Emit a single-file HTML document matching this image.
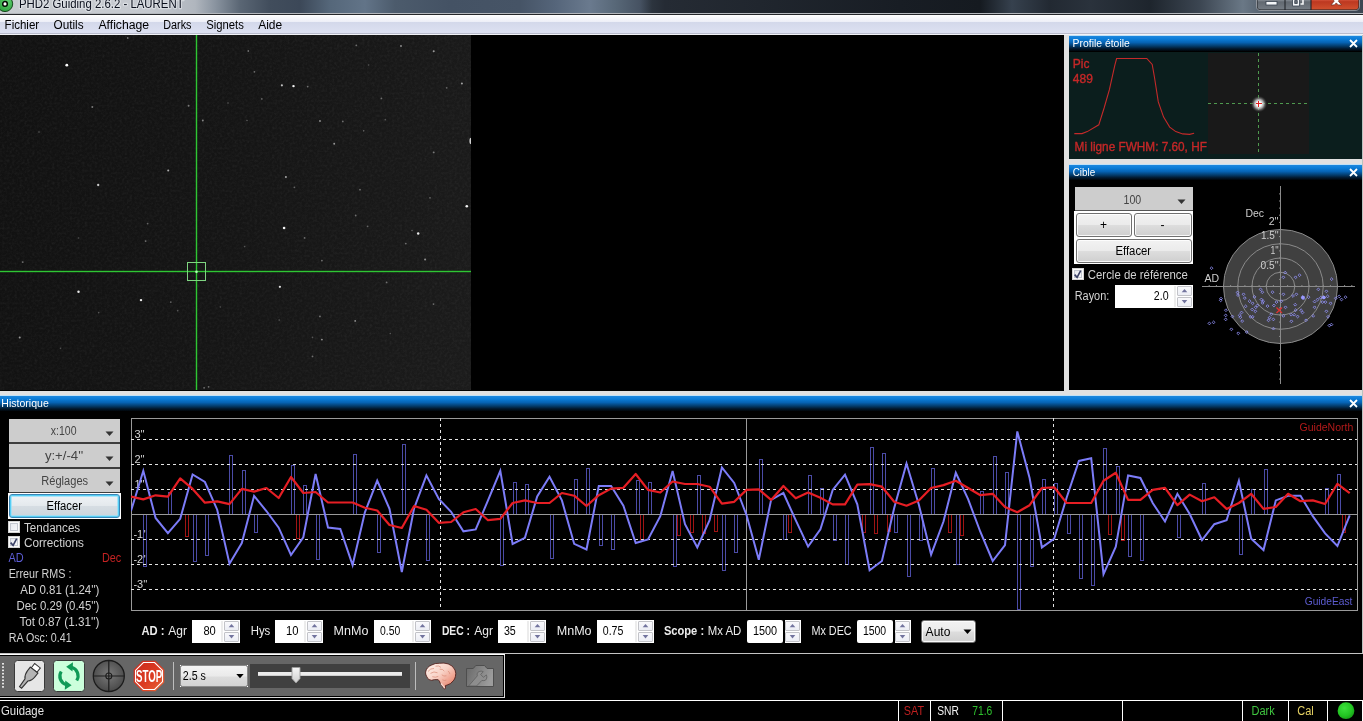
<!DOCTYPE html>
<html lang="fr"><head><meta charset="utf-8"><title>PHD2 Guiding 2.6.2 - LAURENT</title>
<style>
html,body{margin:0;padding:0;background:#000;}
body{width:1363px;height:721px;overflow:hidden;position:relative;font-family:"Liberation Sans",sans-serif;font-size:12px;}
#root{position:absolute;left:0;top:0;width:1363px;height:721px;overflow:hidden;background:#000;}
#root div,#root svg{position:absolute;box-sizing:border-box;}
.cap{background:linear-gradient(to bottom,#bfe0f6 0,#bfe0f6 1px,#1e88de 1px,#0a7cd8 4px,#0663b4 7.5px,#033c6c 11px,#021c34 13.5px,#000 16.5px);}
.silver{background:#cdcdcd;border-bottom:0 solid #3c3c3c;}
.w7btn{border:1px solid #707070;border-radius:3px;background:linear-gradient(to bottom,#f2f2f2 0,#ebebeb 48%,#dddddd 52%,#cfcfcf 100%);box-shadow:inset 0 0 0 1px rgba(255,255,255,.85);}
.w7hot{border:1px solid #3a86b6;border-radius:3px;background:linear-gradient(to bottom,#f0f3f6 0,#e4e9ed 48%,#d6dde3 52%,#ccd5dc 100%);box-shadow:inset 0 0 0 1px #56cef4, inset 0 0 0 2px rgba(150,224,250,.75);}
.spin{background:#fff;}
.sb{border:1px solid #c2c3c8;border-radius:1px;background:linear-gradient(to bottom,#f9f9fc 0,#eceef5 100%);}
.chk{width:12px;height:12px;border:1px solid #d4d4d4;background:linear-gradient(135deg,#e2e4ea 0,#f4f5f8 70%,#fff 100%);box-shadow:inset 0 0 0 1px #fbfbfb, inset 0 0 0 2px #c4c8d0;}
</style></head>
<body><div id="root">
<div id="titlebar" style="left:0;top:0;width:1363px;height:13px;background:linear-gradient(to right,#c9cdd2 0,#c4c8ce 150px,#b0b6be 195px,#8a94a0 215px,#5a6674 240px,#414d5c 270px,#3c4858 300px,#55677a 330px,#627488 365px,#4c5b6c 395px,#445264 450px,#465466 520px,#55657a 555px,#6a7a8e 590px,#586878 615px,#465262 640px,#2c343e 652px,#252b34 665px,#20262e 760px,#181d24 900px,#151a20 980px,#36414e 1012px,#222932 1050px,#2a323c 1090px,#1e252d 1150px,#3c4652 1200px,#6a7886 1243px,#56626f 1262px,#3c4652 1363px);"></div>
<div style="left:0;top:13px;width:1363px;height:1px;background:#b4b8bd;"></div>
<div style="left:0;top:14px;width:1363px;height:1px;background:#25272b;"></div>
<svg style="left:0;top:0" width="16" height="13" viewBox="0 0 16 13"><defs><radialGradient id="ic" cx=".65" cy=".3" r=".8"><stop offset="0" stop-color="#5fd070"/><stop offset="1" stop-color="#2a9a3a"/></radialGradient></defs><circle cx="5" cy="3.900" r="7.700" fill="url(#ic)" stroke="#0c3c12" stroke-width=".9"/><circle cx="5" cy="3.900" r="2.300" fill="#fff" stroke="#020a02" stroke-width="1.500"/></svg>
<svg style="left:1254px;top:0" width="109" height="13" viewBox="0 0 109 13">
<defs><linearGradient id="wb1" x1="0" y1="0" x2="0" y2="1"><stop offset="0" stop-color="#8e959d"/><stop offset=".45" stop-color="#7a8189"/><stop offset=".5" stop-color="#626971"/><stop offset="1" stop-color="#757c84"/></linearGradient>
<linearGradient id="wb2" x1="0" y1="0" x2="0" y2="1"><stop offset="0" stop-color="#de7a64"/><stop offset=".4" stop-color="#cf4e36"/><stop offset=".5" stop-color="#bd3820"/><stop offset="1" stop-color="#d0502e"/></linearGradient></defs>
<path d="M2.5,-6 V6 Q2.5,10.5 7,10.5 H101 Q105.500,10.5 105.5,6 V-6 Z" fill="#1a1d22" stroke="#d7dbe0" stroke-opacity=".55" stroke-width="1"/>
<path d="M3.5,-6 V6 Q3.5,9.5 7,9.5 H30.500 V-6 Z" fill="url(#wb1)"/>
<path d="M31.500,-6 V9.5 H56.500 V-6 Z" fill="url(#wb1)"/>
<path d="M57.500,-6 V9.5 H101 Q104.500,9.500 104.500,6 V-6 Z" fill="url(#wb2)"/>
<rect x="12" y="1.500" width="11" height="3.500" fill="#f4f6f8" stroke="#3a4450" stroke-width=".8"/>
<path d="M38.500,-2 h7 v8 h-7 z M40.700,0.500 h2.600 v3 h-2.600 z" fill="#f4f6f8" fill-rule="evenodd" stroke="#3a4450" stroke-width=".8"/>
<path d="M41.500,-3 h7.500 v7 h-2.500" fill="none" stroke="#f4f6f8" stroke-width="1.600"/>
<path d="M77,-3.500 L80.300,-3.500 L82.300,-0.500 L84.300,-3.500 L87.600,-3.500 L84.400,1.200 L87.600,4.900 L84.200,4.900 L82.300,2.900 L80.400,4.900 L77,4.900 L80.200,1.200 Z" fill="#fff" stroke="#6a2a1c" stroke-width=".7"/>
</svg>
<div id="menubar" style="left:0;top:15px;width:1363px;height:20px;background:linear-gradient(to bottom,#ffffff 0,#eceef7 7px,#d3d8ea 7px,#dde1f2 18px,#b9bccd 18px,#b9bccd 19px,#f2f3f8 19px,#f2f3f8 20px);"></div>
<div id="guide" style="left:0;top:35px;width:471px;height:355px;background:linear-gradient(100deg,#111111 0,#151515 50%,#1b1b1b 100%);overflow:hidden;">
<svg style="left:0;top:0" width="471" height="355" viewBox="0 35 471 355">
<defs><filter id="nz" x="0" y="0" width="100%" height="100%"><feTurbulence type="fractalNoise" baseFrequency=".4" numOctaves="2" seed="7" result="n"/><feColorMatrix type="matrix" values="0 0 0 0 1  0 0 0 0 1  0 0 0 0 1  .33 .33 .33 0 -.42"/></filter><filter id="sb"><feGaussianBlur stdDeviation=".6"/></filter></defs>
<rect x="0" y="35" width="471" height="355" filter="url(#nz)" opacity=".16"/>
<g filter="url(#sb)"><circle cx="66.8" cy="65.2" r="1.41" fill="rgb(255,255,255)"/><circle cx="92.3" cy="107.0" r="0.96" fill="rgb(121,121,121)"/><circle cx="188.6" cy="105.7" r="0.96" fill="rgb(121,121,121)"/><circle cx="202.8" cy="120.5" r="0.96" fill="rgb(132,132,132)"/><circle cx="168.2" cy="170.6" r="1.02" fill="rgb(173,173,173)"/><circle cx="98.2" cy="185.0" r="1.15" fill="rgb(203,203,203)"/><circle cx="127.7" cy="38.0" r="0.90" fill="rgb(111,111,111)"/><circle cx="228.0" cy="103.0" r="0.83" fill="rgb(91,91,91)"/><circle cx="39.0" cy="132.0" r="0.83" fill="rgb(91,91,91)"/><circle cx="248.3" cy="51.0" r="0.90" fill="rgb(111,111,111)"/><circle cx="356.3" cy="45.3" r="0.90" fill="rgb(111,111,111)"/><circle cx="401.0" cy="46.0" r="0.96" fill="rgb(142,142,142)"/><circle cx="433.7" cy="51.2" r="1.02" fill="rgb(152,152,152)"/><circle cx="254.4" cy="71.8" r="0.90" fill="rgb(111,111,111)"/><circle cx="281.9" cy="85.3" r="1.09" fill="rgb(193,193,193)"/><circle cx="293.5" cy="86.1" r="1.22" fill="rgb(244,244,244)"/><circle cx="307.7" cy="86.6" r="0.90" fill="rgb(111,111,111)"/><circle cx="461.9" cy="83.6" r="1.02" fill="rgb(162,162,162)"/><circle cx="446.7" cy="87.8" r="0.90" fill="rgb(101,101,101)"/><circle cx="261.8" cy="98.9" r="0.90" fill="rgb(101,101,101)"/><circle cx="381.4" cy="98.4" r="0.90" fill="rgb(111,111,111)"/><circle cx="320.0" cy="121.0" r="0.96" fill="rgb(142,142,142)"/><circle cx="342.8" cy="121.4" r="0.90" fill="rgb(111,111,111)"/><circle cx="247.0" cy="120.5" r="0.83" fill="rgb(91,91,91)"/><circle cx="363.7" cy="130.8" r="0.83" fill="rgb(101,101,101)"/><circle cx="334.2" cy="143.8" r="0.96" fill="rgb(152,152,152)"/><circle cx="433.7" cy="152.4" r="0.96" fill="rgb(121,121,121)"/><circle cx="285.9" cy="177.0" r="1.02" fill="rgb(162,162,162)"/><circle cx="294.4" cy="187.3" r="0.90" fill="rgb(101,101,101)"/><circle cx="360.0" cy="189.7" r="0.90" fill="rgb(111,111,111)"/><circle cx="430.0" cy="197.8" r="0.90" fill="rgb(101,101,101)"/><circle cx="466.8" cy="206.2" r="1.28" fill="rgb(244,244,244)"/><circle cx="368.6" cy="65.0" r="0.83" fill="rgb(86,86,86)"/><circle cx="385.3" cy="119.7" r="0.83" fill="rgb(86,86,86)"/><circle cx="147.6" cy="223.6" r="0.90" fill="rgb(101,101,101)"/><circle cx="145.6" cy="241.1" r="0.90" fill="rgb(111,111,111)"/><circle cx="22.7" cy="262.1" r="0.96" fill="rgb(111,111,111)"/><circle cx="78.5" cy="291.7" r="1.22" fill="rgb(234,234,234)"/><circle cx="141.0" cy="300.1" r="1.22" fill="rgb(234,234,234)"/><circle cx="170.8" cy="302.1" r="0.90" fill="rgb(101,101,101)"/><circle cx="177.7" cy="310.7" r="0.83" fill="rgb(86,86,86)"/><circle cx="98.7" cy="312.7" r="0.83" fill="rgb(86,86,86)"/><circle cx="19.7" cy="337.4" r="1.02" fill="rgb(152,152,152)"/><circle cx="204.1" cy="387.8" r="0.90" fill="rgb(111,111,111)"/><circle cx="208.6" cy="386.8" r="0.90" fill="rgb(111,111,111)"/><circle cx="78.5" cy="238.0" r="0.83" fill="rgb(80,80,80)"/><circle cx="220.4" cy="307.0" r="0.83" fill="rgb(80,80,80)"/><circle cx="60.5" cy="348.3" r="0.83" fill="rgb(80,80,80)"/><circle cx="284.1" cy="228.0" r="1.28" fill="rgb(244,244,244)"/><circle cx="304.6" cy="237.9" r="0.90" fill="rgb(111,111,111)"/><circle cx="355.7" cy="215.5" r="0.90" fill="rgb(111,111,111)"/><circle cx="367.6" cy="226.3" r="0.90" fill="rgb(101,101,101)"/><circle cx="418.2" cy="233.5" r="1.22" fill="rgb(234,234,234)"/><circle cx="412.0" cy="230.5" r="0.83" fill="rgb(101,101,101)"/><circle cx="405.8" cy="243.6" r="0.90" fill="rgb(111,111,111)"/><circle cx="425.1" cy="259.6" r="1.02" fill="rgb(142,142,142)"/><circle cx="321.9" cy="260.6" r="0.90" fill="rgb(111,111,111)"/><circle cx="244.6" cy="246.6" r="0.83" fill="rgb(86,86,86)"/><circle cx="279.9" cy="286.8" r="1.15" fill="rgb(224,224,224)"/><circle cx="386.6" cy="282.4" r="0.90" fill="rgb(111,111,111)"/><circle cx="433.5" cy="304.1" r="0.90" fill="rgb(111,111,111)"/><circle cx="319.9" cy="316.4" r="0.96" fill="rgb(111,111,111)"/><circle cx="355.2" cy="320.9" r="0.96" fill="rgb(142,142,142)"/><circle cx="321.9" cy="339.6" r="0.96" fill="rgb(142,142,142)"/><circle cx="312.5" cy="337.4" r="0.83" fill="rgb(86,86,86)"/><circle cx="312.5" cy="356.4" r="0.90" fill="rgb(111,111,111)"/><circle cx="279.2" cy="320.1" r="0.83" fill="rgb(86,86,86)"/><circle cx="390.3" cy="333.5" r="0.83" fill="rgb(86,86,86)"/><ellipse cx="471.300" cy="141" rx="1.900" ry="3.200" fill="#d0d0d0"/></g>
<rect x="196" y="35" width="1" height="355" fill="#37d63c"/><rect x="0" y="271" width="471" height="1" fill="#37d63c"/><rect x="195" y="35" width="3" height="355" fill="#1e9a22" opacity=".28"/><rect x="0" y="270" width="471" height="3" fill="#1e9a22" opacity=".28"/><rect x="187.500" y="262.500" width="18" height="18" fill="none" stroke="#7fd581" stroke-width="1"/><circle cx="196.500" cy="271.800" r="1.300" fill="#b6ffb8"/></svg></div>
<div style="left:1064px;top:35px;width:5px;height:356px;background:#e1e1e1;"></div>
<div style="left:1069px;top:159px;width:294px;height:5px;background:#e1e1e1;"></div>
<div style="left:0;top:391px;width:1363px;height:4px;background:#e1e1e1;"></div><div style="left:1064px;top:390px;width:299px;height:1px;background:#e1e1e1;"></div>
<div style="left:1362px;top:35px;width:1px;height:618px;background:#b9c2c0;"></div>
<div class="cap" style="left:1069px;top:35px;width:293px;height:17px;"></div>
<svg style="left:1349px;top:39px" width="9" height="9" viewBox="0 0 9 9"><path d="M1,1 L8,8 M8,1 L1,8" stroke="#fff" stroke-width="1.800" fill="none"/></svg>
<div id="profile" style="left:1069px;top:52px;width:293px;height:107px;background:#0b1e1d;overflow:hidden;">
<svg style="left:0;top:0" width="293" height="107" viewBox="1069 52 293 107">
<defs><radialGradient id="st"><stop offset="0" stop-color="#fff"/><stop offset=".3" stop-color="#fafafa"/><stop offset=".55" stop-color="#c8c8c8" stop-opacity=".8"/><stop offset=".8" stop-color="#6a6a6a" stop-opacity=".4"/><stop offset="1" stop-color="#1a1a1a" stop-opacity="0"/></radialGradient></defs>
<polyline fill="none" stroke="#c42a2a" stroke-width="1.100" points="1074.3,133.6 1082.0,133.6 1087.3,131.6 1098.8,124.8 1104.1,108.0 1109.4,89.7 1114.8,65.3 1116.6,58.5 1146.8,58.5 1152.2,64.5 1154.5,77.5 1158.3,101.9 1163.6,117.1 1169.7,127.1 1175.8,131.6 1182.7,133.9 1189.6,134.4 1194.1,133.2"/>
<rect x="1208" y="53" width="101" height="101" fill="#191919"/>
<path d="M1208,103.500 H1308" stroke="#4f9a4f" stroke-width="1" stroke-dasharray="3 3" fill="none"/><path d="M1258.500,53 V153" stroke="#4f9a4f" stroke-width="1" stroke-dasharray="3 3" fill="none"/>
<circle cx="1259" cy="104" r="8.500" fill="url(#st)"/>
<path d="M1256,103.500 H1262 M1258.500,101 V107" stroke="#e02020" stroke-width="1" fill="none"/>
</svg></div>
<div class="cap" style="left:1069px;top:164px;width:293px;height:17px;"></div>
<svg style="left:1349px;top:168px" width="9" height="9" viewBox="0 0 9 9"><path d="M1,1 L8,8 M8,1 L1,8" stroke="#fff" stroke-width="1.800" fill="none"/></svg>
<div id="cible" style="left:1069px;top:181px;width:293px;height:209px;background:#000;"></div>
<div class="silver" style="left:1075px;top:187px;width:118px;height:23px;"></div><div style="left:1075px;top:210px;width:118px;height:1px;background:#555;"></div>
<svg style="left:1177px;top:199px" width="9" height="6" viewBox="0 0 9 6"><path d="M0.500,0.500 H8.500 L4.500,5 Z" fill="#333"/></svg>
<div style="left:1074px;top:211px;width:119px;height:53px;background:#fff;"></div>
<div class="w7btn" style="left:1076px;top:213px;width:56px;height:24px;"></div><div class="w7btn" style="left:1134px;top:213px;width:58px;height:24px;"></div><div class="w7btn" style="left:1076px;top:239px;width:116px;height:24px;"></div>
<div class="chk" style="left:1072px;top:268px;"></div>
<svg style="left:1072px;top:268px" width="13" height="13" viewBox="0 0 13 13"><path d="M2.600,6.600 L5.100,9.400 L8.700,2.600" stroke="#3a4066" stroke-width="1.600" fill="none"/></svg>
<div class="spin" style="left:1115px;top:285px;width:78px;height:23px;"></div><div style="left:1174px;top:286px;width:2px;height:21px;background:#ececec;"></div><div class="sb" style="left:1177px;top:286px;width:15px;height:10px;"></div><div class="sb" style="left:1177px;top:297px;width:15px;height:10px;"></div><svg style="left:1177px;top:285px" width="15" height="23" viewBox="0 0 15 23"><path d="M4.700,7.300 L7.500,3.900 L10.300,7.300 Z" fill="#72749e"/><path d="M4.700,15 L7.500,18.400 L10.300,15 Z" fill="#72749e"/></svg>
<svg id="target" style="left:1195px;top:181px" width="167" height="209" viewBox="1195 181 167 209">
<circle cx="1280.5" cy="286.5" r="57" fill="#404040"/><circle cx="1280.5" cy="286.5" r="14.25" fill="none" stroke="#8a8a8a" stroke-width="1"/><circle cx="1280.5" cy="286.5" r="28.5" fill="none" stroke="#8a8a8a" stroke-width="1"/><circle cx="1280.5" cy="286.5" r="42.75" fill="none" stroke="#8a8a8a" stroke-width="1"/><circle cx="1280.5" cy="286.5" r="57" fill="none" stroke="#8a8a8a" stroke-width="1"/><path d="M1202,286.5 H1355 M1280.5,186 V384" stroke="#8a8a8a" stroke-width="1" fill="none"/><path d="M1287.6,285.0 v1 M1273.4,285.0 v1 M1294.8,285.0 v1 M1266.2,285.0 v1 M1301.9,285.0 v1 M1259.1,285.0 v1 M1309.0,285.0 v1 M1252.0,285.0 v1 M1316.1,285.0 v1 M1244.9,285.0 v1 M1323.2,285.0 v1 M1237.8,285.0 v1 M1330.4,285.0 v1 M1230.6,285.0 v1 M1337.5,285.0 v1 M1223.5,285.0 v1 M1344.6,285.0 v1 M1216.4,285.0 v1 M1351.8,285.0 v1 M1209.2,285.0 v1 M1279.0,293.6 h1 M1279.0,279.4 h1 M1279.0,300.8 h1 M1279.0,272.2 h1 M1279.0,307.9 h1 M1279.0,265.1 h1 M1279.0,315.0 h1 M1279.0,258.0 h1 M1279.0,322.1 h1 M1279.0,250.9 h1 M1279.0,329.2 h1 M1279.0,243.8 h1 M1279.0,336.4 h1 M1279.0,236.6 h1 M1279.0,343.5 h1 M1279.0,229.5 h1 M1279.0,350.6 h1 M1279.0,222.4 h1 M1279.0,357.8 h1 M1279.0,215.2 h1 M1279.0,364.9 h1 M1279.0,208.1 h1 M1279.0,372.0 h1 M1279.0,201.0 h1 M1279.0,379.1 h1 M1279.0,193.9 h1 " stroke="#8a8a8a" stroke-width="1" fill="none"/>
<path d="M1285.2,271.2 l1.400,1.400 l-1.400,1.400 l-1.400,-1.400 z" fill="none" stroke="#9090f6" stroke-width=".85"/><path d="M1283.4,275.9 l1.400,1.400 l-1.400,1.400 l-1.400,-1.400 z" fill="none" stroke="#9090f6" stroke-width=".85"/><path d="M1295.6,275.9 l1.400,1.400 l-1.400,1.400 l-1.400,-1.400 z" fill="none" stroke="#9090f6" stroke-width=".85"/><path d="M1299.5,273.8 l1.400,1.400 l-1.400,1.400 l-1.400,-1.400 z" fill="none" stroke="#9090f6" stroke-width=".85"/><path d="M1331.6,277.8 l1.400,1.400 l-1.400,1.400 l-1.400,-1.400 z" fill="none" stroke="#9090f6" stroke-width=".85"/><path d="M1260.5,288.0 l1.400,1.400 l-1.400,1.400 l-1.400,-1.400 z" fill="none" stroke="#9090f6" stroke-width=".85"/><path d="M1262.3,290.8 l1.400,1.400 l-1.400,1.400 l-1.400,-1.400 z" fill="none" stroke="#9090f6" stroke-width=".85"/><path d="M1272.5,290.8 l1.400,1.400 l-1.400,1.400 l-1.400,-1.400 z" fill="none" stroke="#9090f6" stroke-width=".85"/><path d="M1283.4,292.9 l1.400,1.400 l-1.400,1.400 l-1.400,-1.400 z" fill="none" stroke="#9090f6" stroke-width=".85"/><path d="M1293.0,294.6 l1.400,1.400 l-1.400,1.400 l-1.400,-1.400 z" fill="none" stroke="#9090f6" stroke-width=".85"/><path d="M1296.4,292.9 l1.400,1.400 l-1.400,1.400 l-1.400,-1.400 z" fill="none" stroke="#9090f6" stroke-width=".85"/><path d="M1318.4,288.0 l1.400,1.400 l-1.400,1.400 l-1.400,-1.400 z" fill="none" stroke="#9090f6" stroke-width=".85"/><path d="M1326.4,289.9 l1.400,1.400 l-1.400,1.400 l-1.400,-1.400 z" fill="none" stroke="#9090f6" stroke-width=".85"/><path d="M1237.5,291.1 l1.400,1.400 l-1.400,1.400 l-1.400,-1.400 z" fill="none" stroke="#9090f6" stroke-width=".85"/><path d="M1238.0,293.7 l1.400,1.400 l-1.400,1.400 l-1.400,-1.400 z" fill="none" stroke="#9090f6" stroke-width=".85"/><path d="M1243.5,292.9 l1.400,1.400 l-1.400,1.400 l-1.400,-1.400 z" fill="none" stroke="#9090f6" stroke-width=".85"/><path d="M1244.8,296.7 l1.400,1.400 l-1.400,1.400 l-1.400,-1.400 z" fill="none" stroke="#9090f6" stroke-width=".85"/><path d="M1221.0,297.2 l1.400,1.400 l-1.400,1.400 l-1.400,-1.400 z" fill="none" stroke="#9090f6" stroke-width=".85"/><path d="M1220.7,298.9 l1.400,1.400 l-1.400,1.400 l-1.400,-1.400 z" fill="none" stroke="#9090f6" stroke-width=".85"/><path d="M1254.5,295.5 l1.400,1.400 l-1.400,1.400 l-1.400,-1.400 z" fill="none" stroke="#9090f6" stroke-width=".85"/><path d="M1261.4,298.1 l1.400,1.400 l-1.400,1.400 l-1.400,-1.400 z" fill="none" stroke="#9090f6" stroke-width=".85"/><path d="M1263.1,299.8 l1.400,1.400 l-1.400,1.400 l-1.400,-1.400 z" fill="none" stroke="#9090f6" stroke-width=".85"/><path d="M1262.6,301.5 l1.400,1.400 l-1.400,1.400 l-1.400,-1.400 z" fill="none" stroke="#9090f6" stroke-width=".85"/><path d="M1249.6,299.8 l1.400,1.400 l-1.400,1.400 l-1.400,-1.400 z" fill="none" stroke="#9090f6" stroke-width=".85"/><path d="M1252.6,301.9 l1.400,1.400 l-1.400,1.400 l-1.400,-1.400 z" fill="none" stroke="#9090f6" stroke-width=".85"/><path d="M1257.4,304.1 l1.400,1.400 l-1.400,1.400 l-1.400,-1.400 z" fill="none" stroke="#9090f6" stroke-width=".85"/><path d="M1255.7,305.9 l1.400,1.400 l-1.400,1.400 l-1.400,-1.400 z" fill="none" stroke="#9090f6" stroke-width=".85"/><path d="M1252.2,308.1 l1.400,1.400 l-1.400,1.400 l-1.400,-1.400 z" fill="none" stroke="#9090f6" stroke-width=".85"/><path d="M1255.3,309.9 l1.400,1.400 l-1.400,1.400 l-1.400,-1.400 z" fill="none" stroke="#9090f6" stroke-width=".85"/><path d="M1245.6,305.0 l1.400,1.400 l-1.400,1.400 l-1.400,-1.400 z" fill="none" stroke="#9090f6" stroke-width=".85"/><path d="M1267.5,304.7 l1.400,1.400 l-1.400,1.400 l-1.400,-1.400 z" fill="none" stroke="#9090f6" stroke-width=".85"/><path d="M1273.9,304.1 l1.400,1.400 l-1.400,1.400 l-1.400,-1.400 z" fill="none" stroke="#9090f6" stroke-width=".85"/><path d="M1276.5,300.7 l1.400,1.400 l-1.400,1.400 l-1.400,-1.400 z" fill="none" stroke="#9090f6" stroke-width=".85"/><path d="M1281.3,299.8 l1.400,1.400 l-1.400,1.400 l-1.400,-1.400 z" fill="none" stroke="#9090f6" stroke-width=".85"/><path d="M1285.5,305.9 l1.400,1.400 l-1.400,1.400 l-1.400,-1.400 z" fill="none" stroke="#9090f6" stroke-width=".85"/><path d="M1295.2,303.3 l1.400,1.400 l-1.400,1.400 l-1.400,-1.400 z" fill="none" stroke="#9090f6" stroke-width=".85"/><path d="M1295.6,308.8 l1.400,1.400 l-1.400,1.400 l-1.400,-1.400 z" fill="none" stroke="#9090f6" stroke-width=".85"/><path d="M1301.1,308.8 l1.400,1.400 l-1.400,1.400 l-1.400,-1.400 z" fill="none" stroke="#9090f6" stroke-width=".85"/><path d="M1302.5,311.1 l1.400,1.400 l-1.400,1.400 l-1.400,-1.400 z" fill="none" stroke="#9090f6" stroke-width=".85"/><path d="M1291.2,313.3 l1.400,1.400 l-1.400,1.400 l-1.400,-1.400 z" fill="none" stroke="#9090f6" stroke-width=".85"/><path d="M1294.2,313.3 l1.400,1.400 l-1.400,1.400 l-1.400,-1.400 z" fill="none" stroke="#9090f6" stroke-width=".85"/><path d="M1297.6,315.1 l1.400,1.400 l-1.400,1.400 l-1.400,-1.400 z" fill="none" stroke="#9090f6" stroke-width=".85"/><path d="M1283.4,314.5 l1.400,1.400 l-1.400,1.400 l-1.400,-1.400 z" fill="none" stroke="#9090f6" stroke-width=".85"/><path d="M1302.8,295.5 l1.400,1.400 l-1.400,1.400 l-1.400,-1.400 z" fill="none" stroke="#9090f6" stroke-width=".85"/><path d="M1303.4,297.2 l1.400,1.400 l-1.400,1.400 l-1.400,-1.400 z" fill="none" stroke="#9090f6" stroke-width=".85"/><path d="M1308.6,295.8 l1.400,1.400 l-1.400,1.400 l-1.400,-1.400 z" fill="none" stroke="#9090f6" stroke-width=".85"/><path d="M1314.6,300.2 l1.400,1.400 l-1.400,1.400 l-1.400,-1.400 z" fill="none" stroke="#9090f6" stroke-width=".85"/><path d="M1317.6,298.1 l1.400,1.400 l-1.400,1.400 l-1.400,-1.400 z" fill="none" stroke="#9090f6" stroke-width=".85"/><path d="M1320.7,296.3 l1.400,1.400 l-1.400,1.400 l-1.400,-1.400 z" fill="none" stroke="#9090f6" stroke-width=".85"/><path d="M1323.6,295.8 l1.400,1.400 l-1.400,1.400 l-1.400,-1.400 z" fill="none" stroke="#9090f6" stroke-width=".85"/><path d="M1327.6,295.0 l1.400,1.400 l-1.400,1.400 l-1.400,-1.400 z" fill="none" stroke="#9090f6" stroke-width=".85"/><path d="M1322.4,300.7 l1.400,1.400 l-1.400,1.400 l-1.400,-1.400 z" fill="none" stroke="#9090f6" stroke-width=".85"/><path d="M1325.4,300.7 l1.400,1.400 l-1.400,1.400 l-1.400,-1.400 z" fill="none" stroke="#9090f6" stroke-width=".85"/><path d="M1330.6,301.9 l1.400,1.400 l-1.400,1.400 l-1.400,-1.400 z" fill="none" stroke="#9090f6" stroke-width=".85"/><path d="M1314.6,305.9 l1.400,1.400 l-1.400,1.400 l-1.400,-1.400 z" fill="none" stroke="#9090f6" stroke-width=".85"/><path d="M1326.4,309.9 l1.400,1.400 l-1.400,1.400 l-1.400,-1.400 z" fill="none" stroke="#9090f6" stroke-width=".85"/><path d="M1328.1,315.4 l1.400,1.400 l-1.400,1.400 l-1.400,-1.400 z" fill="none" stroke="#9090f6" stroke-width=".85"/><path d="M1313.2,314.5 l1.400,1.400 l-1.400,1.400 l-1.400,-1.400 z" fill="none" stroke="#9090f6" stroke-width=".85"/><path d="M1335.8,296.9 l1.400,1.400 l-1.400,1.400 l-1.400,-1.400 z" fill="none" stroke="#9090f6" stroke-width=".85"/><path d="M1339.2,295.0 l1.400,1.400 l-1.400,1.400 l-1.400,-1.400 z" fill="none" stroke="#9090f6" stroke-width=".85"/><path d="M1341.5,298.1 l1.400,1.400 l-1.400,1.400 l-1.400,-1.400 z" fill="none" stroke="#9090f6" stroke-width=".85"/><path d="M1345.5,295.8 l1.400,1.400 l-1.400,1.400 l-1.400,-1.400 z" fill="none" stroke="#9090f6" stroke-width=".85"/><path d="M1225.9,308.8 l1.400,1.400 l-1.400,1.400 l-1.400,-1.400 z" fill="none" stroke="#9090f6" stroke-width=".85"/><path d="M1225.7,314.0 l1.400,1.400 l-1.400,1.400 l-1.400,-1.400 z" fill="none" stroke="#9090f6" stroke-width=".85"/><path d="M1225.7,318.0 l1.400,1.400 l-1.400,1.400 l-1.400,-1.400 z" fill="none" stroke="#9090f6" stroke-width=".85"/><path d="M1232.4,315.1 l1.400,1.400 l-1.400,1.400 l-1.400,-1.400 z" fill="none" stroke="#9090f6" stroke-width=".85"/><path d="M1239.6,314.0 l1.400,1.400 l-1.400,1.400 l-1.400,-1.400 z" fill="none" stroke="#9090f6" stroke-width=".85"/><path d="M1240.4,315.8 l1.400,1.400 l-1.400,1.400 l-1.400,-1.400 z" fill="none" stroke="#9090f6" stroke-width=".85"/><path d="M1241.5,311.1 l1.400,1.400 l-1.400,1.400 l-1.400,-1.400 z" fill="none" stroke="#9090f6" stroke-width=".85"/><path d="M1242.2,319.7 l1.400,1.400 l-1.400,1.400 l-1.400,-1.400 z" fill="none" stroke="#9090f6" stroke-width=".85"/><path d="M1250.5,315.4 l1.400,1.400 l-1.400,1.400 l-1.400,-1.400 z" fill="none" stroke="#9090f6" stroke-width=".85"/><path d="M1252.7,315.4 l1.400,1.400 l-1.400,1.400 l-1.400,-1.400 z" fill="none" stroke="#9090f6" stroke-width=".85"/><path d="M1271.3,312.8 l1.400,1.400 l-1.400,1.400 l-1.400,-1.400 z" fill="none" stroke="#9090f6" stroke-width=".85"/><path d="M1269.5,316.3 l1.400,1.400 l-1.400,1.400 l-1.400,-1.400 z" fill="none" stroke="#9090f6" stroke-width=".85"/><path d="M1268.5,318.9 l1.400,1.400 l-1.400,1.400 l-1.400,-1.400 z" fill="none" stroke="#9090f6" stroke-width=".85"/><path d="M1273.4,318.0 l1.400,1.400 l-1.400,1.400 l-1.400,-1.400 z" fill="none" stroke="#9090f6" stroke-width=".85"/><path d="M1291.4,319.9 l1.400,1.400 l-1.400,1.400 l-1.400,-1.400 z" fill="none" stroke="#9090f6" stroke-width=".85"/><path d="M1306.0,318.9 l1.400,1.400 l-1.400,1.400 l-1.400,-1.400 z" fill="none" stroke="#9090f6" stroke-width=".85"/><path d="M1273.4,327.2 l1.400,1.400 l-1.400,1.400 l-1.400,-1.400 z" fill="none" stroke="#9090f6" stroke-width=".85"/><path d="M1246.7,330.7 l1.400,1.400 l-1.400,1.400 l-1.400,-1.400 z" fill="none" stroke="#9090f6" stroke-width=".85"/><path d="M1238.3,331.9 l1.400,1.400 l-1.400,1.400 l-1.400,-1.400 z" fill="none" stroke="#9090f6" stroke-width=".85"/><path d="M1231.4,327.9 l1.400,1.400 l-1.400,1.400 l-1.400,-1.400 z" fill="none" stroke="#9090f6" stroke-width=".85"/><path d="M1209.4,322.0 l1.400,1.400 l-1.400,1.400 l-1.400,-1.400 z" fill="none" stroke="#9090f6" stroke-width=".85"/><path d="M1213.6,321.0 l1.400,1.400 l-1.400,1.400 l-1.400,-1.400 z" fill="none" stroke="#9090f6" stroke-width=".85"/><path d="M1329.4,324.1 l1.400,1.400 l-1.400,1.400 l-1.400,-1.400 z" fill="none" stroke="#9090f6" stroke-width=".85"/><path d="M1331.4,323.2 l1.400,1.400 l-1.400,1.400 l-1.400,-1.400 z" fill="none" stroke="#9090f6" stroke-width=".85"/><path d="M1302.7,296.3 l1.400,1.400 l-1.400,1.400 l-1.400,-1.400 z" fill="none" stroke="#9090f6" stroke-width=".85"/><path d="M1324.0,296.3 l1.400,1.400 l-1.400,1.400 l-1.400,-1.400 z" fill="none" stroke="#9090f6" stroke-width=".85"/><path d="M1211.5,266.8 l1.400,1.400 l-1.400,1.400 l-1.400,-1.400 z" fill="none" stroke="#9090f6" stroke-width=".85"/><circle cx="1303" cy="297.500" r="1.800" fill="#9a9aff"/><circle cx="1323.800" cy="297.500" r="1.800" fill="#9a9aff"/><path d="M1276.500,307.500 l5.500,5.500 M1282,307.500 l-5.500,5.500" stroke="#e03030" stroke-width="1.300" fill="none"/></svg>
<div class="cap" style="left:0;top:395px;width:1362px;height:17px;"></div>
<svg style="left:1349px;top:399px" width="9" height="9" viewBox="0 0 9 9"><path d="M1,1 L8,8 M8,1 L1,8" stroke="#fff" stroke-width="1.800" fill="none"/></svg>
<div id="hist" style="left:0;top:412px;width:1362px;height:241px;background:#000;"></div>
<div class="silver" style="left:9px;top:419px;width:111px;height:23px;"></div><div style="left:9px;top:442px;width:111px;height:2px;background:#3e3e3e;"></div><svg style="left:105px;top:431px" width="9" height="6" viewBox="0 0 9 6"><path d="M0.500,0.500 H8.500 L4.500,5 Z" fill="#333"/></svg>
<div class="silver" style="left:9px;top:444px;width:111px;height:23px;"></div><div style="left:9px;top:467px;width:111px;height:2px;background:#3e3e3e;"></div><svg style="left:105px;top:456px" width="9" height="6" viewBox="0 0 9 6"><path d="M0.500,0.500 H8.500 L4.500,5 Z" fill="#333"/></svg>
<div class="silver" style="left:9px;top:469px;width:111px;height:23px;"></div><div style="left:9px;top:492px;width:111px;height:1px;background:#3e3e3e;"></div><svg style="left:105px;top:481px" width="9" height="6" viewBox="0 0 9 6"><path d="M0.500,0.500 H8.500 L4.500,5 Z" fill="#333"/></svg>
<div style="left:8px;top:493px;width:113px;height:26px;background:#fff;"></div><div class="w7hot" style="left:9px;top:494px;width:111px;height:24px;"></div>
<div class="chk" style="left:8px;top:521px;"></div><div class="chk" style="left:8px;top:536px;"></div><svg style="left:8px;top:536px" width="13" height="13" viewBox="0 0 13 13"><path d="M2.600,6.600 L5.100,9.400 L8.700,2.600" stroke="#3a4066" stroke-width="1.600" fill="none"/></svg>
<svg id="graph" style="left:131px;top:418px;will-change:transform" width="1227" height="193" viewBox="131 418 1227 193">
<rect x="131.500" y="418.500" width="1226" height="192" fill="#000" stroke="#9a9a9a" stroke-width="1"/>
<g font-family="Liberation Sans, sans-serif" font-size="11" fill="#d4d4d4"><text x="134.400" y="438">3''</text><text x="134.400" y="463">2''</text><text x="134.400" y="488">1''</text><text x="133.400" y="538">-1''</text><text x="133.400" y="563">-2''</text><text x="133.400" y="588">-3''</text></g>
<g fill="none" stroke="#4b4ba6" stroke-width="1"><rect x="143.5" y="514.5" width="3" height="52" /><rect x="168.5" y="492.5" width="3" height="22" /><rect x="193.5" y="514.5" width="3" height="47" /><rect x="205.5" y="514.5" width="3" height="41" /><rect x="229.5" y="455.5" width="3" height="59" /><rect x="242.5" y="470.5" width="3" height="44" /><rect x="254.5" y="514.5" width="3" height="18" /><rect x="291.5" y="465.5" width="3" height="49" /><rect x="303.5" y="485.5" width="3" height="29" /><rect x="316.5" y="514.5" width="3" height="45" /><rect x="353.5" y="454.5" width="3" height="60" /><rect x="377.5" y="514.5" width="3" height="38" /><rect x="402.5" y="444.5" width="3" height="70" /><rect x="426.5" y="514.5" width="3" height="46" /><rect x="500.5" y="514.5" width="3" height="51" /><rect x="513.5" y="482.5" width="3" height="32" /><rect x="525.5" y="484.5" width="3" height="30" /><rect x="550.5" y="514.5" width="3" height="44" /><rect x="574.5" y="479.5" width="3" height="35" /><rect x="586.5" y="468.5" width="3" height="46" /><rect x="599.5" y="514.5" width="3" height="31" /><rect x="611.5" y="514.5" width="3" height="35" /><rect x="636.5" y="480.5" width="3" height="34" /><rect x="648.5" y="482.5" width="3" height="32" /><rect x="673.5" y="514.5" width="3" height="52" /><rect x="697.5" y="475.5" width="3" height="39" /><rect x="722.5" y="514.5" width="3" height="56" /><rect x="734.5" y="514.5" width="3" height="38" /><rect x="759.5" y="459.5" width="3" height="55" /><rect x="783.5" y="514.5" width="3" height="25" /><rect x="808.5" y="475.5" width="3" height="39" /><rect x="820.5" y="488.5" width="3" height="26" /><rect x="833.5" y="514.5" width="3" height="26" /><rect x="845.5" y="514.5" width="3" height="50" /><rect x="870.5" y="447.5" width="3" height="67" /><rect x="882.5" y="453.5" width="3" height="61" /><rect x="894.5" y="514.5" width="3" height="18" /><rect x="907.5" y="514.5" width="3" height="62" /><rect x="919.5" y="514.5" width="3" height="26" /><rect x="931.5" y="468.5" width="3" height="46" /><rect x="956.5" y="514.5" width="3" height="50" /><rect x="980.5" y="491.5" width="3" height="23" /><rect x="993.5" y="456.5" width="3" height="58" /><rect x="1005.5" y="472.5" width="3" height="42" /><rect x="1017.5" y="514.5" width="3" height="95" /><rect x="1030.5" y="514.5" width="3" height="52" /><rect x="1042.5" y="479.5" width="3" height="35" /><rect x="1054.5" y="483.5" width="3" height="31" /><rect x="1067.5" y="514.5" width="3" height="19" /><rect x="1079.5" y="514.5" width="3" height="64" /><rect x="1091.5" y="514.5" width="3" height="71" /><rect x="1103.5" y="448.5" width="3" height="66" /><rect x="1116.5" y="466.5" width="3" height="48" /><rect x="1128.5" y="514.5" width="3" height="42" /><rect x="1140.5" y="514.5" width="3" height="46" /><rect x="1177.5" y="514.5" width="3" height="23" /><rect x="1202.5" y="483.5" width="3" height="31" /><rect x="1239.5" y="514.5" width="3" height="40" /><rect x="1251.5" y="489.5" width="3" height="25" /><rect x="1264.5" y="469.5" width="3" height="45" /><rect x="1325.5" y="488.5" width="3" height="26" /><rect x="1337.5" y="474.5" width="3" height="40" /></g>
<g fill="none" stroke="#a01414" stroke-width="1"><rect x="185.5" y="514.500" width="3" height="22" /><rect x="296.5" y="514.500" width="3" height="24" /><rect x="640.5" y="514.500" width="3" height="25" /><rect x="677.5" y="514.500" width="3" height="21" /><rect x="690.5" y="514.500" width="3" height="18" /><rect x="702.5" y="514.500" width="3" height="19" /><rect x="714.5" y="514.500" width="3" height="17" /><rect x="788.5" y="514.500" width="3" height="18" /><rect x="862.5" y="514.500" width="3" height="18" /><rect x="874.5" y="514.500" width="3" height="19" /><rect x="887.5" y="514.500" width="3" height="17" /><rect x="948.5" y="514.500" width="3" height="18" /><rect x="960.5" y="514.500" width="3" height="21" /><rect x="1108.5" y="514.500" width="3" height="20" /><rect x="1121.5" y="514.500" width="3" height="26" /><rect x="1342.5" y="514.500" width="3" height="18" /></g>
<path d="M131,439.5 H1357 M131,464.5 H1357 M131,489.5 H1357 M131,539.5 H1357 M131,564.5 H1357 M131,589.5 H1357 " stroke="#e4e4e4" stroke-width="1" stroke-dasharray="3 3" fill="none"/><path d="M440.500,418 V610 M1053.500,418 V610" stroke="#e4e4e4" stroke-width="1" stroke-dasharray="3 3" fill="none"/><path d="M131,514.500 H1357 M746.500,418 V610" stroke="#9a9a9a" stroke-width="1" fill="none"/>
<polyline fill="none" stroke="#7c7cf8" stroke-width="2" stroke-linejoin="miter" points="131.0,511.0 143.3,470.8 155.6,518.0 167.9,533.2 180.2,518.8 192.6,474.5 204.9,482.0 217.2,509.7 229.5,563.7 241.8,543.0 254.1,495.8 266.4,511.0 278.7,527.7 291.0,555.0 303.3,537.3 315.6,474.0 328.0,527.6 340.3,528.9 352.6,565.0 364.9,512.3 377.2,480.7 389.5,508.9 401.8,572.0 414.1,508.3 426.4,475.4 438.8,499.0 451.1,511.8 463.4,531.3 475.7,529.4 488.0,500.4 500.3,470.9 512.6,543.9 524.9,537.9 537.2,496.5 549.5,476.7 561.9,500.4 574.2,543.9 586.5,549.5 598.8,485.9 611.1,485.9 623.4,505.7 635.7,543.0 648.0,539.4 660.3,516.2 672.6,470.9 685.0,524.2 697.3,547.4 709.6,520.2 721.9,467.5 734.2,483.0 746.5,515.0 758.8,559.7 771.1,499.9 783.4,493.0 795.7,520.2 808.1,546.6 820.4,529.4 832.7,489.9 845.0,474.6 857.3,504.4 869.6,570.3 881.9,561.0 894.2,508.0 906.5,463.5 918.8,504.4 931.1,554.5 943.5,521.5 955.8,472.8 968.1,499.1 980.4,532.0 992.7,561.0 1005.0,545.2 1017.3,431.4 1029.6,478.0 1041.9,547.4 1054.2,538.7 1066.6,497.8 1078.9,460.9 1091.2,458.3 1103.5,574.2 1115.8,546.6 1128.1,475.4 1140.4,478.0 1152.7,503.0 1165.0,521.5 1177.4,493.8 1189.7,514.0 1202.0,540.0 1214.3,524.2 1226.6,520.2 1238.9,480.7 1251.2,538.7 1263.5,550.0 1275.8,500.4 1288.1,495.7 1300.5,495.7 1312.8,516.2 1325.1,533.4 1337.4,546.0 1349.7,515.4"/>
<polyline fill="none" stroke="#e61e24" stroke-width="2.200" stroke-linejoin="round" points="131.0,496.6 143.3,499.4 155.6,495.3 167.9,496.6 180.2,478.3 192.6,488.9 204.9,502.7 217.2,501.4 229.5,504.1 241.8,488.9 254.1,491.6 266.4,488.0 278.7,498.0 291.0,477.0 303.3,493.0 315.6,492.0 328.0,502.5 340.3,502.5 352.6,502.5 364.9,507.8 377.2,510.5 389.5,525.0 401.8,528.0 414.1,506.0 426.4,509.7 438.8,522.8 451.1,522.0 463.4,512.3 475.7,509.0 488.0,520.2 500.3,518.9 512.6,503.0 524.9,500.4 537.2,503.0 549.5,503.0 561.9,493.0 574.2,495.7 586.5,506.0 598.8,495.2 611.1,488.6 623.4,487.8 635.7,474.0 648.0,489.9 660.3,492.5 672.6,481.5 685.0,484.0 697.3,484.0 709.6,486.7 721.9,503.6 734.2,501.8 746.5,489.9 758.8,489.4 771.1,499.9 783.4,485.9 795.7,498.3 808.1,492.5 820.4,497.8 832.7,504.4 845.0,504.4 857.3,484.6 869.6,484.1 881.9,486.7 894.2,501.8 906.5,505.7 918.8,500.4 931.1,488.0 943.5,485.1 955.8,480.7 968.1,488.0 980.4,495.2 992.7,493.8 1005.0,507.0 1017.3,512.3 1029.6,505.2 1041.9,488.0 1054.2,487.3 1066.6,503.0 1078.9,503.0 1091.2,503.0 1103.5,480.7 1115.8,472.8 1128.1,499.9 1140.4,499.9 1152.7,489.9 1165.0,487.8 1177.4,505.2 1189.7,494.6 1202.0,501.2 1214.3,497.3 1226.6,508.9 1238.9,503.0 1251.2,493.8 1263.5,508.9 1275.8,507.0 1288.1,493.8 1300.5,501.2 1312.8,500.4 1325.1,504.0 1337.4,483.8 1349.7,493.2"/>
</svg>
<div class="spin" style="left:192px;top:620px;width:48px;height:23px;"></div><div style="left:221px;top:621px;width:2px;height:21px;background:#ececec;"></div><div class="sb" style="left:224px;top:621px;width:15px;height:10px;"></div><div class="sb" style="left:224px;top:632px;width:15px;height:10px;"></div><svg style="left:224px;top:620px" width="15" height="23" viewBox="0 0 15 23"><path d="M4.700,7.300 L7.500,3.900 L10.300,7.300 Z" fill="#72749e"/><path d="M4.700,15 L7.500,18.400 L10.300,15 Z" fill="#72749e"/></svg>
<div class="spin" style="left:275px;top:620px;width:48px;height:23px;"></div><div style="left:304px;top:621px;width:2px;height:21px;background:#ececec;"></div><div class="sb" style="left:307px;top:621px;width:15px;height:10px;"></div><div class="sb" style="left:307px;top:632px;width:15px;height:10px;"></div><svg style="left:307px;top:620px" width="15" height="23" viewBox="0 0 15 23"><path d="M4.700,7.300 L7.500,3.900 L10.300,7.300 Z" fill="#72749e"/><path d="M4.700,15 L7.500,18.400 L10.300,15 Z" fill="#72749e"/></svg>
<div class="spin" style="left:374px;top:620px;width:57px;height:23px;"></div><div style="left:412px;top:621px;width:2px;height:21px;background:#ececec;"></div><div class="sb" style="left:415px;top:621px;width:15px;height:10px;"></div><div class="sb" style="left:415px;top:632px;width:15px;height:10px;"></div><svg style="left:415px;top:620px" width="15" height="23" viewBox="0 0 15 23"><path d="M4.700,7.300 L7.500,3.900 L10.300,7.300 Z" fill="#72749e"/><path d="M4.700,15 L7.500,18.400 L10.300,15 Z" fill="#72749e"/></svg>
<div class="spin" style="left:498px;top:620px;width:48px;height:23px;"></div><div style="left:527px;top:621px;width:2px;height:21px;background:#ececec;"></div><div class="sb" style="left:530px;top:621px;width:15px;height:10px;"></div><div class="sb" style="left:530px;top:632px;width:15px;height:10px;"></div><svg style="left:530px;top:620px" width="15" height="23" viewBox="0 0 15 23"><path d="M4.700,7.300 L7.500,3.900 L10.300,7.300 Z" fill="#72749e"/><path d="M4.700,15 L7.500,18.400 L10.300,15 Z" fill="#72749e"/></svg>
<div class="spin" style="left:597px;top:620px;width:57px;height:23px;"></div><div style="left:635px;top:621px;width:2px;height:21px;background:#ececec;"></div><div class="sb" style="left:638px;top:621px;width:15px;height:10px;"></div><div class="sb" style="left:638px;top:632px;width:15px;height:10px;"></div><svg style="left:638px;top:620px" width="15" height="23" viewBox="0 0 15 23"><path d="M4.700,7.300 L7.500,3.900 L10.300,7.300 Z" fill="#72749e"/><path d="M4.700,15 L7.500,18.400 L10.300,15 Z" fill="#72749e"/></svg>
<div class="spin" style="left:747px;top:620px;width:36px;height:23px;border-radius:2px;"></div><div class="spin" style="left:785px;top:620px;width:16px;height:23px;"></div><div class="sb" style="left:785px;top:621px;width:15px;height:10px;"></div><div class="sb" style="left:785px;top:632px;width:15px;height:10px;"></div><svg style="left:785px;top:620px" width="15" height="23" viewBox="0 0 15 23"><path d="M4.700,7.300 L7.500,3.900 L10.300,7.300 Z" fill="#72749e"/><path d="M4.700,15 L7.500,18.400 L10.300,15 Z" fill="#72749e"/></svg>
<div class="spin" style="left:857px;top:620px;width:36px;height:23px;border-radius:2px;"></div><div class="spin" style="left:895px;top:620px;width:16px;height:23px;"></div><div class="sb" style="left:895px;top:621px;width:15px;height:10px;"></div><div class="sb" style="left:895px;top:632px;width:15px;height:10px;"></div><svg style="left:895px;top:620px" width="15" height="23" viewBox="0 0 15 23"><path d="M4.700,7.300 L7.500,3.900 L10.300,7.300 Z" fill="#72749e"/><path d="M4.700,15 L7.500,18.400 L10.300,15 Z" fill="#72749e"/></svg>
<div class="w7btn" style="left:921px;top:620px;width:55px;height:23px;"></div><svg style="left:963px;top:629px" width="9" height="6" viewBox="0 0 9 6"><path d="M0.500,0.500 H8.500 L4.500,5 Z" fill="#000"/></svg>
<div style="left:0;top:653px;width:1363px;height:1px;background:#c4c4c4;"></div>
<div id="toolbar" style="left:-1px;top:654px;width:506px;height:44px;border:1px solid #dadada;background:#000;"><div style="left:0;top:1px;width:503px;height:40px;background:#666;"></div></div>
<div style="left:0;top:654px;width:505px;height:1px;background:#fff;"></div>
<svg id="tbicons" style="left:0;top:656px" width="503" height="40" viewBox="0 656 503 40">
<defs>
<radialGradient id="xh" cx=".5" cy=".45" r=".6"><stop offset="0" stop-color="#7a7a7a"/><stop offset="1" stop-color="#454545"/></radialGradient>
<linearGradient id="stp" x1="0" y1="0" x2="1" y2="1"><stop offset="0" stop-color="#c8281c"/><stop offset=".55" stop-color="#dc3c22"/><stop offset="1" stop-color="#e86838"/></linearGradient>
<linearGradient id="cmb" x1="0" y1="0" x2="0" y2="1"><stop offset="0" stop-color="#f4f4f4"/><stop offset=".5" stop-color="#eaeaea"/><stop offset=".55" stop-color="#dcdcdc"/><stop offset="1" stop-color="#d2d2d2"/></linearGradient>
<linearGradient id="brn" x1="0" y1="0" x2="1" y2="1"><stop offset="0" stop-color="#fff4ee"/><stop offset=".45" stop-color="#f8d2c6"/><stop offset=".75" stop-color="#ee9c88"/><stop offset="1" stop-color="#e06a54"/></linearGradient>
<linearGradient id="cam" x1="0" y1="0" x2="1" y2=".3"><stop offset="0" stop-color="#686868"/><stop offset="1" stop-color="#9c9c9c"/></linearGradient>
<linearGradient id="thm" x1="0" y1="0" x2="0" y2="1"><stop offset="0" stop-color="#f6f6f6"/><stop offset="1" stop-color="#cfcfcf"/></linearGradient>
</defs><rect x="2" y="663.0" width="2" height="1.600" fill="#e6e6e6"/><rect x="2" y="666.3" width="2" height="1.600" fill="#e6e6e6"/><rect x="2" y="669.6" width="2" height="1.600" fill="#e6e6e6"/><rect x="2" y="672.9" width="2" height="1.600" fill="#e6e6e6"/><rect x="2" y="676.2" width="2" height="1.600" fill="#e6e6e6"/><rect x="2" y="679.5" width="2" height="1.600" fill="#e6e6e6"/><rect x="2" y="682.8" width="2" height="1.600" fill="#e6e6e6"/><rect x="2" y="686.1" width="2" height="1.600" fill="#e6e6e6"/><rect x="14.500" y="660.500" width="30" height="31" rx="3" fill="#e6e6e6" stroke="#3a3a3a"/><g transform="translate(29.500,676) rotate(38)"><path d="M-3.600,-13 h7.200 v5.500 h-7.200 z" fill="#fff" stroke="#333" stroke-width="1"/><path d="M-4.800,-7.500 h9.600 v4.500 q0,5 -3,8 l-0.500,9.500 h-2.600 l-0.500,-9.500 q-3,-3 -3,-8 z" fill="#b4b4b4" stroke="#333" stroke-width="1.100"/></g><rect x="53.500" y="660.500" width="31" height="31" rx="3" fill="#ccffdc" stroke="#3a3a3a"/><g transform="translate(138,0) scale(-1,1)"><g fill="none" stroke="#0f9a56" stroke-width="3.200"><path d="M61.300,680.500 A8.800,8.800 0 0 1 66.500,667.300"/><path d="M76.800,671.500 A8.800,8.800 0 0 1 71.600,684.700"/></g><path d="M65,662.300 l6.800,4.400 l-6.300,4.800 z" fill="#0f9a56"/><path d="M73.200,689.700 l-6.800,-4.400 l6.300,-4.800 z" fill="#0f9a56"/></g><circle cx="108.800" cy="676" r="15.500" fill="url(#xh)" stroke="#1c1c1c" stroke-width="1.300"/><path d="M93.500,676 H124 M108.800,660.700 V691.300" stroke="#1c1c1c" stroke-width="1.200"/><circle cx="108.800" cy="676" r="3" fill="none" stroke="#1c1c1c" stroke-width="1.100"/><polygon points="164.3,682.4 155.4,691.3 142.6,691.3 133.7,682.4 133.7,669.6 142.6,660.7 155.4,660.7 164.3,669.6" fill="url(#stp)"/><polygon points="162.5,681.6 154.6,689.5 143.4,689.5 135.5,681.6 135.5,670.4 143.4,662.5 154.6,662.5 162.5,670.4" fill="none" stroke="#fff" stroke-width="1.100"/><rect x="173" y="662" width="1" height="28" fill="#bdbdbd"/><rect x="180.500" y="665.500" width="67" height="21" rx="2" fill="url(#cmb)" stroke="#8a8a8a"/><path d="M236.300,674 h7.400 l-3.700,4.300 z" fill="#000"/><rect x="180" y="665" width="1" height="1" fill="#fff"/><rect x="247" y="665" width="1" height="1" fill="#fff"/><rect x="180" y="686" width="1" height="1" fill="#fff"/><rect x="247" y="686" width="1" height="1" fill="#fff"/><rect x="250" y="664" width="160" height="24" fill="#404040"/><rect x="258" y="672" width="144" height="4" fill="#ececec"/><rect x="258" y="675" width="144" height="1" fill="#cfcfcf"/><path d="M292,667.500 h8 v11 l-4,4.500 l-4,-4.500 z" fill="url(#thm)" stroke="#9c9c9c" stroke-width=".9"/><rect x="415" y="662" width="1" height="28" fill="#bdbdbd"/><path d="M425.600,672.100 Q426.500,667 431.700,665 Q435,663 439.400,663.300 Q444,662.600 448.200,663.900 Q453,665.500 455,670 Q456.400,673.500 455.400,676.500 Q454.800,679.300 453.300,680.800 Q450.800,684.200 446.800,685.200 L445.600,685.400 L445.400,688.400 Q444.600,689.300 443.700,688.300 L440.300,683.300 Q439.500,680.800 438.200,679.700 Q434,679.300 431.500,680.300 Q428,680.500 426.500,676.200 Q425.300,674 425.600,672.100 Z" fill="url(#brn)" stroke="#4a1410" stroke-width=".8"/><path d="M428,671.500 q2.500,-3.500 6,-3 m1.500,-2.300 q3.500,-1 5.500,1.200 m-10.500,6 q3.500,-2.600 7,-0.600 m2.200,-3.600 q3.200,-0.500 4.600,2 m-12,5.500 q3,1.200 6,-0.300 m3.500,-1.600 q2,2 4.600,1 m-4,4 q2,1.200 4,0.300 m1.500,-9 q1.800,0.800 2,3" fill="none" stroke="#d98a76" stroke-width=".7"/><path d="M441,683.500 l3.800,4.600" stroke="#f6dcd4" stroke-width="1.200" fill="none"/><path d="M466.500,668.500 h6.700 l2.600,-3 h8.700 l2.600,3 h6.400 v18 h-27 z" fill="url(#cam)" stroke="#4e4e4e" stroke-width="1"/><path d="M468.700,685.900 L477.300,675.900 Q476.200,671.500 481.200,671.100 L483.200,671.600 L480.700,674.500 L483.400,677.300 L486.400,674.900 L486.900,676.900 Q486.500,681.700 481.900,680.400 L476.500,686 Z" fill="#8e8e8e" stroke="#5a5a5a" stroke-width=".7"/></svg>
<div id="status" style="left:0;top:700px;width:1363px;height:21px;border-top:1px solid #fff;background:#000;"></div>
<div style="left:898px;top:701px;width:1px;height:20px;background:#fff;"></div><div style="left:930px;top:701px;width:1px;height:20px;background:#fff;"></div><div style="left:1002px;top:701px;width:1px;height:20px;background:#fff;"></div><div style="left:1122px;top:701px;width:1px;height:20px;background:#fff;"></div><div style="left:1242px;top:701px;width:1px;height:20px;background:#fff;"></div><div style="left:1288px;top:701px;width:1px;height:20px;background:#fff;"></div><div style="left:1327px;top:701px;width:1px;height:20px;background:#fff;"></div><div style="left:1362px;top:701px;width:1px;height:20px;background:#fff;"></div><svg style="left:1336px;top:701px" width="20" height="20" viewBox="0 0 20 20"><defs><radialGradient id="led" cx=".4" cy=".35" r=".7"><stop offset="0" stop-color="#3ce03c"/><stop offset=".65" stop-color="#22c422"/><stop offset="1" stop-color="#179a17"/></radialGradient></defs><circle cx="10" cy="9.700" r="8.400" fill="url(#led)"/></svg>
<svg id="labels" style="left:0;top:0;pointer-events:none;will-change:transform" width="1363" height="721" viewBox="0 0 1363 721" font-family="Liberation Sans, sans-serif">
<text x="18.9" y="7.6" font-size="12" fill="#0a0f1c" textLength="164.7" lengthAdjust="spacingAndGlyphs" style="paint-order:stroke;stroke:#e9edf1;stroke-opacity:.55;stroke-width:2.5px;stroke-linejoin:round">PHD2 Guiding 2.6.2 - LAURENT</text>
<text x="4.6" y="28.8" font-size="12" fill="#000" textLength="34.6" lengthAdjust="spacingAndGlyphs">Fichier</text>
<text x="53.5" y="28.8" font-size="12" fill="#000" textLength="30.1" lengthAdjust="spacingAndGlyphs">Outils</text>
<text x="98.4" y="28.8" font-size="12" fill="#000" textLength="50.8" lengthAdjust="spacingAndGlyphs">Affichage</text>
<text x="163.3" y="28.8" font-size="12" fill="#000" textLength="28.2" lengthAdjust="spacingAndGlyphs">Darks</text>
<text x="206.3" y="28.8" font-size="12" fill="#000" textLength="37.6" lengthAdjust="spacingAndGlyphs">Signets</text>
<text x="258.2" y="28.8" font-size="12" fill="#000" textLength="24.0" lengthAdjust="spacingAndGlyphs">Aide</text>
<text x="1072.6" y="47.0" font-size="11" fill="#fff" textLength="57.2" lengthAdjust="spacingAndGlyphs">Profile étoile</text>
<text x="1072.8" y="67.6" font-size="12" fill="#c62828" stroke="#c62828" stroke-width=".35">Pic</text>
<text x="1072.8" y="82.5" font-size="12" fill="#c62828" stroke="#c62828" stroke-width=".35">489</text>
<text x="1074.6" y="150.7" font-size="12" fill="#c62828" textLength="132.3" lengthAdjust="spacingAndGlyphs" stroke="#c62828" stroke-width=".35">Mi ligne FWHM: 7.60, HF</text>
<text x="1072.7" y="175.8" font-size="11" fill="#fff" textLength="22.5" lengthAdjust="spacingAndGlyphs">Cible</text>
<text x="1123.5" y="203.8" font-size="12" fill="#444" textLength="17.7" lengthAdjust="spacingAndGlyphs">100</text>
<text x="1103.6" y="229.0" font-size="12" fill="#000" text-anchor="middle">+</text>
<text x="1162.5" y="228.5" font-size="12" fill="#000" text-anchor="middle">-</text>
<text x="1115.5" y="254.7" font-size="12" fill="#000" textLength="35.6" lengthAdjust="spacingAndGlyphs">Effacer</text>
<text x="1087.8" y="279.0" font-size="12" fill="#d2d2d2" textLength="100.1" lengthAdjust="spacingAndGlyphs">Cercle de référence</text>
<text x="1074.7" y="300.0" font-size="12" fill="#d2d2d2" textLength="34.6" lengthAdjust="spacingAndGlyphs">Rayon:</text>
<text x="1153.8" y="300.0" font-size="12" fill="#000" textLength="14.8" lengthAdjust="spacingAndGlyphs">2.0</text>
<text x="1245.4" y="217.4" font-size="11" fill="#cfcfcf" textLength="18.6" lengthAdjust="spacingAndGlyphs">Dec</text>
<text x="1268.7" y="224.6" font-size="11" fill="#cfcfcf" textLength="9.9" lengthAdjust="spacingAndGlyphs">2''</text>
<text x="1260.9" y="239.2" font-size="11" fill="#cfcfcf" textLength="17.7" lengthAdjust="spacingAndGlyphs">1.5''</text>
<text x="1270.5" y="253.7" font-size="11" fill="#cfcfcf" textLength="8.1" lengthAdjust="spacingAndGlyphs">1''</text>
<text x="1260.6" y="268.5" font-size="11" fill="#cfcfcf" textLength="18.0" lengthAdjust="spacingAndGlyphs">0.5''</text>
<text x="1204.5" y="281.5" font-size="11" fill="#cfcfcf" textLength="14.6" lengthAdjust="spacingAndGlyphs">AD</text>
<text x="1.3" y="407.0" font-size="11" fill="#fff" textLength="47.5" lengthAdjust="spacingAndGlyphs">Historique</text>
<text x="50.8" y="435.0" font-size="12" fill="#444" textLength="25.7" lengthAdjust="spacingAndGlyphs">x:100</text>
<text x="44.9" y="460.0" font-size="12" fill="#444" textLength="38.3" lengthAdjust="spacingAndGlyphs">y:+/-4''</text>
<text x="41.3" y="485.0" font-size="12" fill="#444" textLength="46.8" lengthAdjust="spacingAndGlyphs">Réglages</text>
<text x="46.5" y="509.5" font-size="12" fill="#000" textLength="35.4" lengthAdjust="spacingAndGlyphs">Effacer</text>
<text x="23.9" y="532.0" font-size="12" fill="#d2d2d2" textLength="56.3" lengthAdjust="spacingAndGlyphs">Tendances</text>
<text x="23.9" y="547.0" font-size="12" fill="#d2d2d2" textLength="60.1" lengthAdjust="spacingAndGlyphs">Corrections</text>
<text x="8.4" y="561.5" font-size="12" fill="#5d5dd6" textLength="15.2" lengthAdjust="spacingAndGlyphs">AD</text>
<text x="101.9" y="561.5" font-size="12" fill="#c42222" textLength="19.3" lengthAdjust="spacingAndGlyphs">Dec</text>
<text x="8.7" y="577.8" font-size="12" fill="#d2d2d2" textLength="62.7" lengthAdjust="spacingAndGlyphs">Erreur RMS :</text>
<text x="20.3" y="593.8" font-size="12" fill="#d2d2d2" textLength="79.1" lengthAdjust="spacingAndGlyphs">AD 0.81 (1.24'')</text>
<text x="16.5" y="609.8" font-size="12" fill="#d2d2d2" textLength="82.9" lengthAdjust="spacingAndGlyphs">Dec 0.29 (0.45'')</text>
<text x="19.5" y="625.5" font-size="12" fill="#d2d2d2" textLength="79.9" lengthAdjust="spacingAndGlyphs">Tot 0.87 (1.31'')</text>
<text x="8.7" y="641.5" font-size="12" fill="#d2d2d2" textLength="63.0" lengthAdjust="spacingAndGlyphs">RA Osc: 0.41</text>
<text x="1299.6" y="430.7" font-size="11" fill="#b41a1a" textLength="53.7" lengthAdjust="spacingAndGlyphs">GuideNorth</text>
<text x="1304.7" y="605.1" font-size="11" fill="#5c5cd0" textLength="47.7" lengthAdjust="spacingAndGlyphs">GuideEast</text>
<text x="141.4" y="635.0" font-size="12" fill="#ececec" font-weight="bold" textLength="23.1" lengthAdjust="spacingAndGlyphs">AD :</text>
<text x="168.2" y="635.0" font-size="12" fill="#ececec" textLength="18.7" lengthAdjust="spacingAndGlyphs">Agr</text>
<text x="203.4" y="635.0" font-size="12" fill="#000" textLength="12.4" lengthAdjust="spacingAndGlyphs">80</text>
<text x="250.7" y="635.0" font-size="12" fill="#ececec" textLength="19.6" lengthAdjust="spacingAndGlyphs">Hys</text>
<text x="285.9" y="635.0" font-size="12" fill="#000" textLength="12.5" lengthAdjust="spacingAndGlyphs">10</text>
<text x="333.6" y="635.0" font-size="12" fill="#ececec" textLength="34.8" lengthAdjust="spacingAndGlyphs">MnMo</text>
<text x="380.1" y="635.0" font-size="12" fill="#000" textLength="20.2" lengthAdjust="spacingAndGlyphs">0.50</text>
<text x="441.9" y="635.0" font-size="12" fill="#ececec" font-weight="bold" textLength="28.1" lengthAdjust="spacingAndGlyphs">DEC :</text>
<text x="474.2" y="635.0" font-size="12" fill="#ececec" textLength="18.7" lengthAdjust="spacingAndGlyphs">Agr</text>
<text x="503.9" y="635.0" font-size="12" fill="#000" textLength="11.9" lengthAdjust="spacingAndGlyphs">35</text>
<text x="556.7" y="635.0" font-size="12" fill="#ececec" textLength="34.9" lengthAdjust="spacingAndGlyphs">MnMo</text>
<text x="602.8" y="635.0" font-size="12" fill="#000" textLength="20.6" lengthAdjust="spacingAndGlyphs">0.75</text>
<text x="663.9" y="635.0" font-size="12" fill="#ececec" font-weight="bold" textLength="40.2" lengthAdjust="spacingAndGlyphs">Scope :</text>
<text x="707.8" y="635.0" font-size="12" fill="#ececec" textLength="33.5" lengthAdjust="spacingAndGlyphs">Mx AD</text>
<text x="752.9" y="635.0" font-size="12" fill="#000" textLength="24.2" lengthAdjust="spacingAndGlyphs">1500</text>
<text x="811.4" y="635.0" font-size="12" fill="#ececec" textLength="40.3" lengthAdjust="spacingAndGlyphs">Mx DEC</text>
<text x="862.9" y="635.0" font-size="12" fill="#000" textLength="23.3" lengthAdjust="spacingAndGlyphs">1500</text>
<text x="925.6" y="636.0" font-size="12" fill="#000" textLength="24.8" lengthAdjust="spacingAndGlyphs">Auto</text>
<text x="136" y="682" font-size="16.5" font-weight="bold" fill="#fff" textLength="26.300" lengthAdjust="spacingAndGlyphs">STOP</text>
<text x="182.8" y="680.0" font-size="12" fill="#000" textLength="23.1" lengthAdjust="spacingAndGlyphs">2.5 s</text>
<text x="1.0" y="715.0" font-size="12" fill="#e4e4e4" textLength="43.0" lengthAdjust="spacingAndGlyphs">Guidage</text>
<text x="903.8" y="714.8" font-size="12" fill="#c02020" textLength="20.2" lengthAdjust="spacingAndGlyphs">SAT</text>
<text x="937.2" y="714.8" font-size="12" fill="#f2f2f2" textLength="21.7" lengthAdjust="spacingAndGlyphs">SNR</text>
<text x="972.3" y="714.8" font-size="12" fill="#2ec02e" textLength="20.0" lengthAdjust="spacingAndGlyphs">71.6</text>
<text x="1251.5" y="714.8" font-size="12" fill="#3fc43f" textLength="23.3" lengthAdjust="spacingAndGlyphs">Dark</text>
<text x="1297.3" y="714.8" font-size="12" fill="#e6d264" textLength="16.5" lengthAdjust="spacingAndGlyphs">Cal</text>
</svg>
</div></body></html>
